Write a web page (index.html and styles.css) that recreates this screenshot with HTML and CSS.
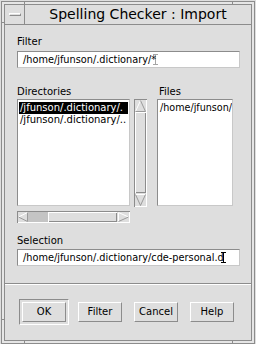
FILE: index.html
```html
<!DOCTYPE html>
<html lang="en">
<head>
  <meta charset="UTF-8" />
  <meta name="viewport" content="width=device-width, initial-scale=1.0"/>
  <title>Spelling Checker : Import</title>
  <link rel="stylesheet" href="styles.css">
</head>
<body>
  <div class="window">
    <div class="inner">
      <div class="titlebar">
        <div class="menu-button"><span class="dash"></span></div>
        <div class="title">Spelling Checker : Import</div>
      </div>

      <div class="content">
        <div class="label">Filter</div>
        <div class="field">/home/jfunson/.dictionary/*<span class="caret inactive"></span></div>

        <div class="browser">
          <div class="label dir-label">Directories</div>
          <div class="label files-label">Files</div>
          <ul class="list dir-list">
            <li class="selected">/jfunson/.dictionary/.</li>
            <li>/jfunson/.dictionary/..</li>
          </ul>
          <div class="vscroll">
            <svg width="13" height="108" viewBox="0 0 13 108" shape-rendering="crispEdges">
              <rect x="0" y="0" width="13" height="108" fill="#dedede"/>
              <path d="M0.5 107.5V0.5H12.5" stroke="#8c8c8c" fill="none"/>
              <path d="M0.5 107.5H12.5V0.5" stroke="#ffffff" fill="none"/>
              <polygon points="6.5,1.5 1.5,12.5 11.5,12.5" fill="#dedede"/>
              <path d="M6.5 1.5L1.5 12.5" stroke="#ffffff" fill="none" shape-rendering="auto"/>
              <path d="M6.5 1.5L11.5 12.5H1.5" stroke="#9a9a9a" fill="none" shape-rendering="auto"/>
              <rect x="1" y="13" width="11" height="81" fill="#dedede"/>
              <path d="M1.5 93.5V13.5H11.5" stroke="#ffffff" fill="none"/>
              <path d="M1.5 93.5H11.5V13.5" stroke="#8c8c8c" fill="none"/>
              <polygon points="1.5,95.5 11.5,95.5 6.5,106.5" fill="#dedede"/>
              <path d="M1.5 95.5H11.5" stroke="#ffffff" fill="none" shape-rendering="auto"/>
              <path d="M1.5 95.5L6.5 106.5L11.5 95.5" stroke="#9a9a9a" fill="none" shape-rendering="auto"/>
            </svg>
          </div>
          <ul class="list files-list">
            <li>/home/jfunson/</li>
          </ul>
          <div class="hscroll">
            <svg width="113" height="12" viewBox="0 0 113 12" shape-rendering="crispEdges">
              <rect x="0" y="0" width="113" height="12" fill="#dedede"/>
              <path d="M0.5 11.5V0.5H112.5" stroke="#8c8c8c" fill="none"/>
              <path d="M0.5 11.5H112.5V0.5" stroke="#ffffff" fill="none"/>
              <polygon points="1.5,6 10.5,1.5 10.5,10.5" fill="#dedede"/>
              <path d="M1.5 6L10.5 1.5" stroke="#ffffff" fill="none" shape-rendering="auto"/>
              <path d="M1.5 6L10.5 10.5V1.5" stroke="#9a9a9a" fill="none" shape-rendering="auto"/>
              <rect x="11" y="1" width="20" height="10" fill="#c4c4c4"/>
              <rect x="31" y="1" width="69" height="10" fill="#dedede"/>
              <path d="M31.5 10.5V1.5H99.5" stroke="#ffffff" fill="none"/>
              <path d="M31.5 10.5H99.5V1.5" stroke="#8c8c8c" fill="none"/>
              <polygon points="101.5,1.5 101.5,10.5 111.5,6" fill="#dedede"/>
              <path d="M101.5 10.5V1.5L111.5 6" stroke="#ffffff" fill="none" shape-rendering="auto"/>
              <path d="M101.5 10.5L111.5 6" stroke="#9a9a9a" fill="none" shape-rendering="auto"/>
            </svg>
          </div>
        </div>

        <div class="label selection-label">Selection</div>
        <div class="field selection">/home/jfunson/.dictionary/cde-personal.d<span class="caret"></span></div>

        <div class="separator"></div>

        <div class="buttons">
          <div class="default-ring"><button type="button">OK</button></div>
          <button type="button">Filter</button>
          <button type="button">Cancel</button>
          <button type="button">Help</button>
        </div>
      </div>
    </div>
  </div>
</body>
</html>
```

FILE: styles.css
```css
body {
  margin: 0;
  background-color: #dedede;
  font-family: "DejaVu Sans", sans-serif;
  font-size: 10px;
  color: #000;
}
.window {
  width: 254px;
  height: 343px;
  margin: 1px 0 0 1px;
  box-sizing: border-box;
  border: 1px solid #8c8c8c;
  padding: 2px;
  background:
    linear-gradient(#8c8c8c, #8c8c8c) 22px 0 / 1px 2px no-repeat,
    linear-gradient(#8c8c8c, #8c8c8c) 230px 0 / 1px 2px no-repeat,
    linear-gradient(#8c8c8c, #8c8c8c) 22px 339px / 1px 2px no-repeat,
    linear-gradient(#8c8c8c, #8c8c8c) 230px 339px / 1px 2px no-repeat,
    linear-gradient(#8c8c8c, #8c8c8c) 0 20px / 2px 1px no-repeat,
    linear-gradient(#8c8c8c, #8c8c8c) 0 317px / 2px 1px no-repeat,
    linear-gradient(#8c8c8c, #8c8c8c) 248px 20px / 2px 1px no-repeat,
    linear-gradient(#8c8c8c, #8c8c8c) 248px 317px / 2px 1px no-repeat,
    #e6e6e6;
}
.inner {
  height: 100%;
  box-sizing: border-box;
  border: 1px solid #8c8c8c;
  background-color: #dedede;
}
.titlebar {
  display: flex;
  height: 20px;
  box-sizing: border-box;
  border-bottom: 1px solid #8c8c8c;
}
.menu-button {
  width: 20px;
  box-sizing: border-box;
  border-right: 1px solid #8c8c8c;
  display: flex;
  align-items: center;
  justify-content: center;
}
.dash {
  width: 12px;
  height: 3px;
  box-sizing: border-box;
  border: 1px solid;
  border-color: #ffffff #8c8c8c #8c8c8c #ffffff;
}
.title {
  flex: 1;
  text-align: center;
  font-size: 14px;
  line-height: 19px;
}
.content {
  padding: 11px 11px 0 12px;
}
.label {
  line-height: 12px;
}
.field {
  height: 17px;
  margin-top: 3px;
  box-sizing: border-box;
  border: 1px solid;
  border-color: #8c8c8c #c8c8c8 #c8c8c8 #8c8c8c;
  background-color: #fff;
  padding: 1px 5px 0;
  line-height: 14px;
  font-size: 9.75px;
  white-space: nowrap;
  overflow: hidden;
}
.caret {
  display: inline-block;
  width: 5px;
  height: 11px;
  margin-left: -3px;
  vertical-align: -2px;
  box-sizing: border-box;
  border-top: 1px solid #000;
  border-bottom: 1px solid #000;
  background: linear-gradient(#000, #000) 2px 0 / 1px 100% no-repeat;
}
.caret.inactive {
  opacity: 0.35;
}
.browser {
  display: grid;
  grid-template-columns: 113px 13px 82px;
  grid-template-rows: 12px 107px auto;
  column-gap: 4px;
  row-gap: 1px;
  margin-top: 18px;
}
.dir-label {
  grid-column: 1;
  grid-row: 1;
}
.files-label {
  grid-column: 3;
  grid-row: 1;
  margin-left: 8px;
}
.list {
  margin: 0;
  padding: 2px 1px;
  list-style: none;
  box-sizing: border-box;
  border: 1px solid;
  border-color: #8c8c8c #c8c8c8 #c8c8c8 #8c8c8c;
  background-color: #fff;
  overflow: hidden;
}
.list li {
  line-height: 12px;
  white-space: nowrap;
  padding-left: 1px;
}
.list li.selected {
  background-color: #000;
  color: #fff;
}
.dir-list {
  grid-column: 1;
  grid-row: 2;
}
.files-list {
  grid-column: 3;
  grid-row: 2;
  margin-left: 6px;
  padding-left: 2px;
  font-size: 9.6px;
}
.files-list li {
  padding-left: 0;
}
.vscroll {
  grid-column: 2;
  grid-row: 2;
  height: 108px;
}
.hscroll {
  grid-column: 1;
  grid-row: 3;
  margin-top: 4px;
  height: 12px;
}
.vscroll svg,
.hscroll svg {
  display: block;
}
.selection-label {
  margin-top: 12px;
}
.selection {
  margin-top: 2px;
}
.separator {
  margin: 17px -11px 0 -12px;
  border-top: 1px solid #8c8c8c;
  border-bottom: 1px solid #ffffff;
}
.buttons {
  display: flex;
  gap: 12px;
  margin-top: 17px;
  padding-left: 5px;
}
button {
  width: 44px;
  height: 20px;
  padding: 0;
  font: inherit;
  color: #000;
  background-color: #dedede;
  border: 1px solid;
  border-color: #ffffff #8c8c8c #8c8c8c #ffffff;
  line-height: 18px;
}
.default-ring {
  display: flex;
  margin: -3px;
  padding: 2px;
  border: 1px solid;
  border-color: #8c8c8c #ffffff #ffffff #8c8c8c;
}
```
